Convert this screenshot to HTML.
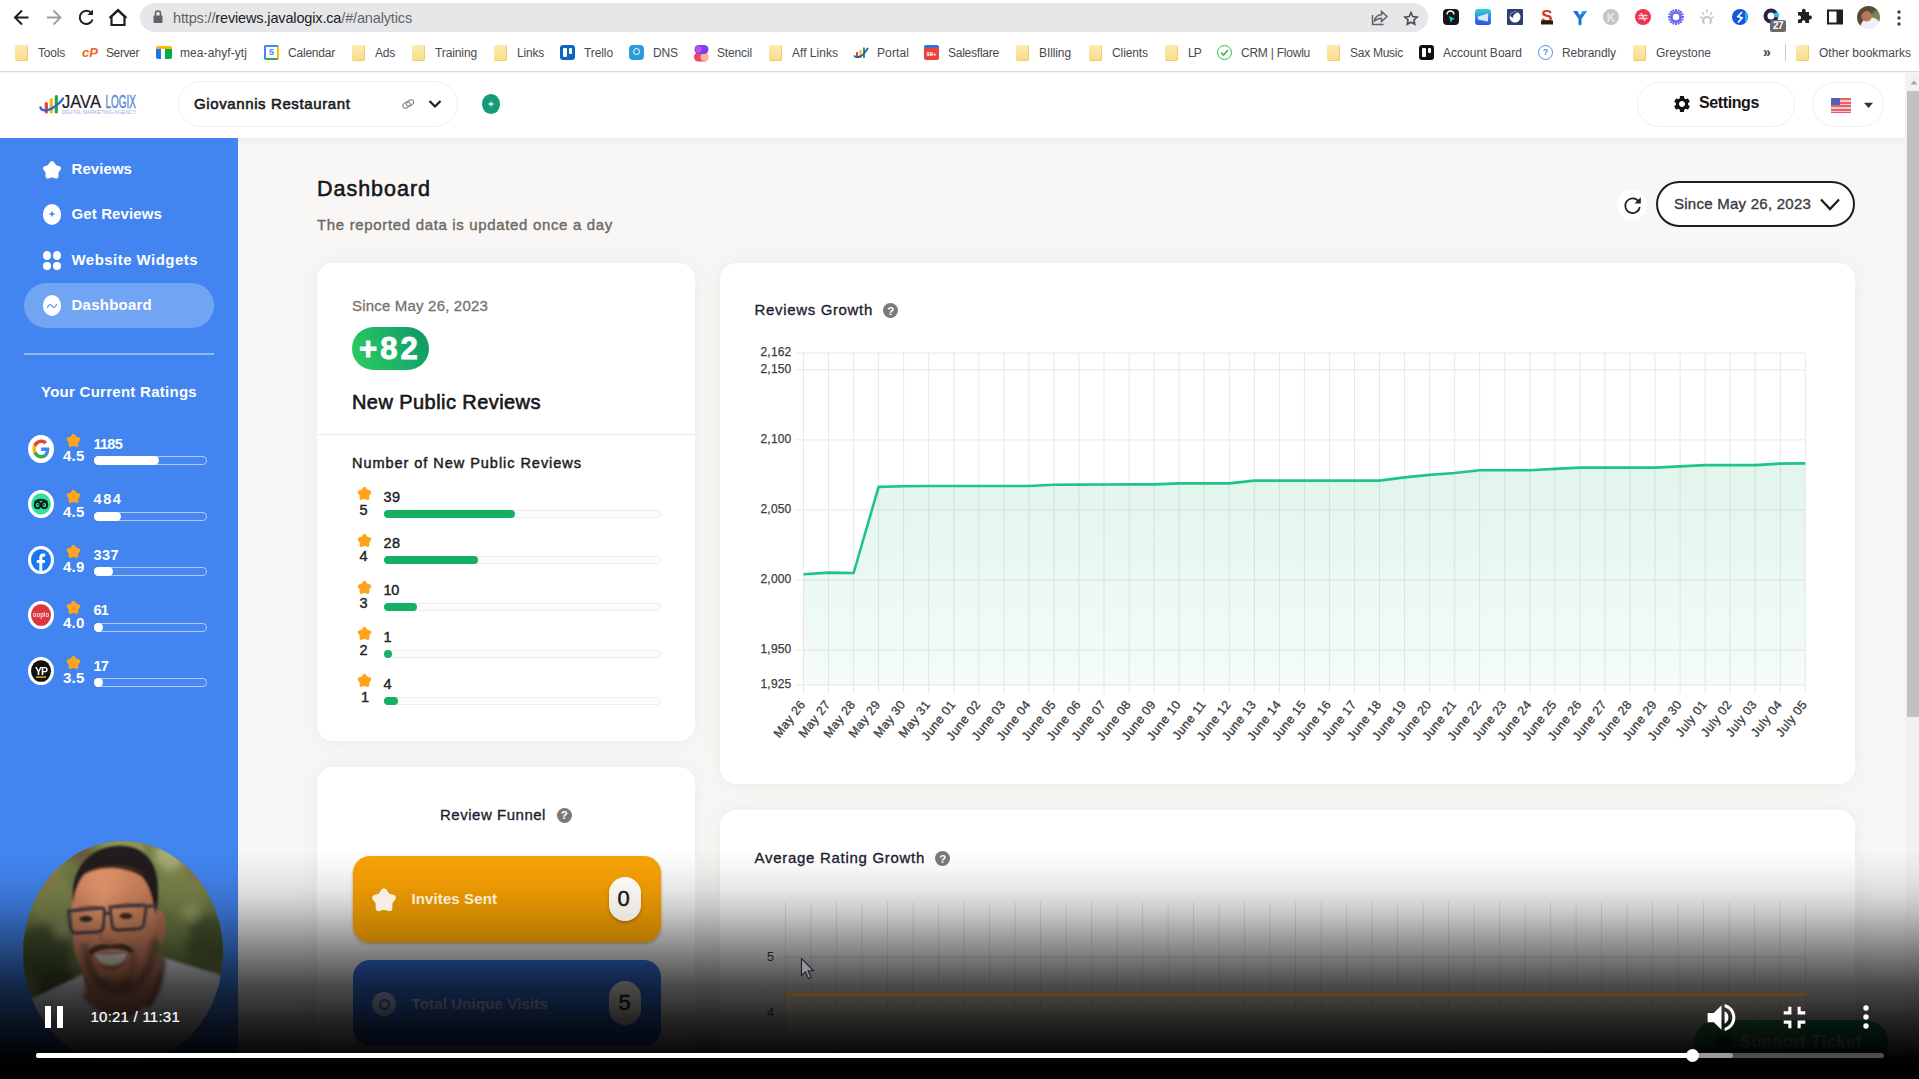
<!DOCTYPE html>
<html lang="en">
<head>
<meta charset="utf-8">
<title>Dashboard</title>
<style>
*{box-sizing:border-box;margin:0;padding:0}
html,body{width:1919px;height:1079px;overflow:hidden;background:#f8f6f4;font-family:"Liberation Sans",sans-serif;color:#1b1b1f}
.abs{position:absolute}
#stage{position:relative;width:1919px;height:1079px;overflow:hidden;background:#f9f7f5}
/* ---------- browser chrome ---------- */
#chrome{position:absolute;left:0;top:0;width:1919px;height:72px;background:#fff;border-bottom:1px solid #d9dadc}
#url{position:absolute;left:140px;top:3px;width:1288px;height:29px;border-radius:15px;background:#e6e7e9}
#url span{position:absolute;left:33px;top:6.5px;font-size:14.5px;color:#5f6368;letter-spacing:-.15px;white-space:nowrap}
#url span b{font-weight:400;color:#202124}
.bm{position:absolute;top:45px;font-size:12.5px;color:#3c4043;white-space:nowrap;letter-spacing:-.35px}
.fold{position:absolute;top:44.500px;width:12.500px;height:16px;border-radius:2px;background:linear-gradient(180deg,#fcebb0,#f9dc88);box-shadow:inset -1px -1px 0 #f1cd6a}
/* ---------- app header ---------- */
#hdr{position:absolute;left:0;top:73px;width:1905px;height:65px;background:#fff}
/* ---------- sidebar ---------- */
#side{position:absolute;left:0;top:138px;width:238px;height:941px;background:#4285f0;color:#fff}
.nav{position:absolute;left:71px;font-weight:700;font-size:15px;letter-spacing:-.2px;white-space:nowrap}
/* ---------- cards ---------- */
.card{position:absolute;background:#fff;border-radius:16px;box-shadow:0 0 20px rgba(70,66,60,.07)}
#scroll{position:absolute;left:1905px;top:73px;width:14px;height:1006px;background:#f1f1f1}
#scroll i{position:absolute;left:2px;top:18px;width:12px;height:626px;background:#c1c1c1}
</style>
</head>
<body>
<div id="stage">

<!-- BROWSER CHROME -->
<div id="chrome">
  <div id="url"><span>https://<b>reviews.javalogix.ca</b>/#/analytics</span></div>
  <svg class="abs" style="left:0;top:0" width="140" height="36" viewBox="0 0 140 36" fill="none" stroke-linecap="butt" stroke-linejoin="miter">
<path d="M28.5 17.5H15.5M22 10.5l-7 7 7 7" stroke="#1f1f1f" stroke-width="2"/>
<path d="M47 17.5h13M53.5 10.500l7 7-7 7" stroke="#9aa0a6" stroke-width="1.8"/>
<path d="M91.500 13.200A6.600 6.600 0 1 0 92.600 19.500" stroke="#1f1f1f" stroke-width="2"/>
<path d="M93 9.500v5.500h-5.500z" fill="#1f1f1f" stroke="none"/>
<path d="M111.500 25v-8.500l6.500-6 6.500 6V25z" stroke="#1f1f1f" stroke-width="2.200"/>
<path d="M109.500 18l8.500-8 8.500 8" stroke="#1f1f1f" stroke-width="2.200"/>
</svg>
<svg class="abs" style="left:152px;top:9px" width="12" height="16" viewBox="0 0 12 16"><rect x="1.500" y="6.500" width="9" height="7.500" rx="1" fill="#5f6368"/><path d="M3.500 7V4.500a2.500 2.500 0 0 1 5 0V7" fill="none" stroke="#5f6368" stroke-width="1.600"/></svg>
<svg class="abs" style="left:1368px;top:6px" width="56" height="24" viewBox="0 0 56 24" fill="none" stroke="#5f6368" stroke-width="1.500">
<path d="M4.500 9v9.500h11"/><path d="M6.500 15c.5-4 3-6 7-6.200V5.500l5.500 5-5.500 5v-3.300c-3 0-5 .8-7 2.800z"/>
<path transform="translate(43 12.500) scale(.8) translate(-43 -12.500)" d="M43 5.200l2.300 4.900 5.300.6-3.900 3.700 1 5.300-4.700-2.600-4.700 2.600 1-5.300-3.900-3.700 5.300-.6z" stroke="#4a4d52" stroke-width="2"/></svg>
<svg class="abs" style="left:1442px;top:8px" width="18" height="18" viewBox="0 0 18 18"><rect x="1" y="1" width="16" height="16" rx="4" fill="#15161c"/><path d="M5 6.500a3.500 3.500 0 0 1 7 0" stroke="#fff" stroke-width="1.500" fill="none"/><path d="M7 8l6 3-3 1-1 3z" fill="#18d3c0"/></svg>
<svg class="abs" style="left:1474px;top:8px" width="18" height="18" viewBox="0 0 18 18"><defs><linearGradient id="e2" x1="0" y1="0" x2="0" y2="1"><stop offset="0" stop-color="#2fd6c4"/><stop offset=".5" stop-color="#3a8df0"/><stop offset="1" stop-color="#2a4fe0"/></linearGradient></defs><rect x="1" y="1" width="16" height="16" rx="3" fill="url(#e2)"/><path d="M4 8.500l10-3v8l-10-2z" fill="#dbe9ff"/></svg>
<svg class="abs" style="left:1506px;top:8px" width="18" height="18" viewBox="0 0 18 18"><rect x="1" y="1" width="16" height="16" rx="1" fill="#2b3f73"/><circle cx="9" cy="9" r="5.500" fill="#fff"/><path d="M4 8a5 5 0 0 1 8-3c-3 0-5 2-5 5z" fill="#2b3f73"/></svg>
<svg class="abs" style="left:1538px;top:8px" width="18" height="18" viewBox="0 0 18 18"><text x="9" y="14" text-anchor="middle" font-family="Liberation Sans,sans-serif" font-weight="700" font-size="17" fill="#d6391f">S</text><rect x="3" y="12.500" width="12" height="4" fill="#2a1a14"/></svg>
<svg class="abs" style="left:1571px;top:8px" width="18" height="18" viewBox="0 0 18 18"><path d="M2 3h4.500l2.500 4.500L11.500 3H16l-5.500 8v5.500l-1.500 1-1.500-1V11z" fill="#1b78d8"/><path d="M9 7.500L11.500 3H16z" fill="#3aa0f0"/></svg>
<svg class="abs" style="left:1602px;top:8px" width="18" height="18" viewBox="0 0 18 18"><circle cx="9" cy="9" r="8" fill="#c4c4c4"/><text x="9" y="13.500" text-anchor="middle" font-family="Liberation Sans,sans-serif" font-weight="700" font-size="12" fill="#e6e6e6">K</text></svg>
<svg class="abs" style="left:1634px;top:8px" width="18" height="18" viewBox="0 0 18 18"><circle cx="9" cy="9" r="8" fill="#ee3350"/><path d="M4.500 7.500h9M4.500 10.500h9M7 5l4 8" stroke="#ffd6de" stroke-width="1.600" fill="none"/></svg>
<svg class="abs" style="left:1667px;top:8px" width="18" height="18" viewBox="0 0 18 18"><g stroke="#6b6cf0" stroke-width="2"><path d="M9 1v16M1 9h16M3.300 3.300l11.400 11.400M14.700 3.300L3.300 14.700M5.900 1.600l6.200 14.800M12.100 1.600L5.900 16.400M1.600 5.900l14.800 6.200M1.600 12.100l14.800-6.200"/></g><circle cx="9" cy="9" r="3.200" fill="#fff"/></svg>
<svg class="abs" style="left:1698px;top:8px" width="18" height="18" viewBox="0 0 18 18"><g stroke="#c9c9c9" stroke-width="1.400" fill="none"><path d="M9 1v4M4 4l2 3M14 4l-2 3M2 9l3 1M16 9l-3 1"/><path d="M6.500 16a4 4 0 1 1 5 0" stroke-width="2.200"/></g></svg>
<svg class="abs" style="left:1731px;top:8px" width="18" height="18" viewBox="0 0 18 18"><circle cx="9" cy="9" r="8" fill="#1557d8"/><path d="M14 3a8 8 0 0 1 0 12z" fill="#28b5f0"/><path d="M11 4L7 8.500l4 1.500-4 4.500" stroke="#fff" stroke-width="1.800" fill="none"/></svg>
<svg class="abs" style="left:1763px;top:8px" width="18" height="18" viewBox="0 0 18 18"><circle cx="8" cy="8" r="5.500" stroke="#2a1f4e" stroke-width="4" fill="none"/><circle cx="13.500" cy="7" r="2.500" fill="#25c7ea"/></svg>
<i class="abs" style="left:1770px;top:20px;width:16px;height:12px;border-radius:2px;background:#6a6a6a;color:#fff;font-style:normal;font-weight:700;font-size:10px;line-height:12px;text-align:center;letter-spacing:-.5px">27</i>
<svg class="abs" style="left:1795px;top:8px" width="18" height="18" viewBox="0 0 18 18"><path d="M7 2.500a1.800 1.800 0 0 1 3.600 0V4H14v3.600h1a1.900 1.900 0 0 1 0 3.800h-1V15h-3.600v-1a1.800 1.800 0 0 0-3.600 0v1H3v-3.600h1.200a1.900 1.900 0 0 0 0-3.800H3V4h4z" fill="#1f1f1f"/></svg>
<svg class="abs" style="left:1826px;top:8px" width="18" height="18" viewBox="0 0 18 18"><rect x="2" y="2.500" width="14" height="13" fill="none" stroke="#1f1f1f" stroke-width="2"/><rect x="10.500" y="2.500" width="5.500" height="13" fill="#1f1f1f"/></svg>
<i class="abs" style="left:1857px;top:6px;width:23px;height:23px;border-radius:50%;background:radial-gradient(circle at 42% 45%,#b9775a 0 26%,transparent 30%),radial-gradient(circle at 60% 95%,#eef0f6 0 38%,transparent 42%),linear-gradient(135deg,#5b4a36 0 45%,#6f8a54 55% 100%)"></i>
<svg class="abs" style="left:1896px;top:9px" width="6" height="18" viewBox="0 0 6 18"><circle cx="3" cy="3" r="1.700" fill="#3c4043"/><circle cx="3" cy="9" r="1.700" fill="#3c4043"/><circle cx="3" cy="15" r="1.700" fill="#3c4043"/></svg>
<i class="fold" style="left:15px"></i>
<span style="position:absolute;white-space:nowrap;left:38.0px;top:45.5px;font-size:12px;line-height:14px;font-weight:400;color:#474a4f;letter-spacing:-0.20px;">Tools</span>
<span style="position:absolute;white-space:nowrap;left:82.0px;top:44.5px;font-size:13px;line-height:16px;font-weight:700;color:#f26322;letter-spacing:0.05px;font-style:italic;">cP</span>
<span style="position:absolute;white-space:nowrap;left:106.0px;top:45.5px;font-size:12px;line-height:14px;font-weight:400;color:#474a4f;letter-spacing:-0.39px;">Server</span>
<i style="position:absolute;left:156px;top:46px;width:16px;height:13px;background:linear-gradient(90deg,#1a73e8 0 30%,#fff 30% 55%,#00ac47 55% 100%);border-top:3px solid #fbbc04;border-radius:2px"></i>
<span style="position:absolute;white-space:nowrap;left:180.0px;top:45.5px;font-size:12px;line-height:14px;font-weight:400;color:#474a4f;letter-spacing:0.08px;">mea-ahyf-ytj</span>
<i style="position:absolute;left:264px;top:45px;width:15px;height:15px;border-radius:3px;background:#fff;border:2.500px solid #4285f4;border-bottom-color:#34a853;border-right-color:#fbbc04;border-radius:2px;font-style:normal;font-size:9px;line-height:10px;font-weight:700;color:#4285f4;text-align:center">5</i>
<span style="position:absolute;white-space:nowrap;left:288.0px;top:45.5px;font-size:12px;line-height:14px;font-weight:400;color:#474a4f;letter-spacing:-0.21px;">Calendar</span>
<i class="fold" style="left:352px"></i>
<span style="position:absolute;white-space:nowrap;left:375.0px;top:45.5px;font-size:12px;line-height:14px;font-weight:400;color:#474a4f;letter-spacing:-0.23px;">Ads</span>
<i class="fold" style="left:412px"></i>
<span style="position:absolute;white-space:nowrap;left:435.0px;top:45.5px;font-size:12px;line-height:14px;font-weight:400;color:#474a4f;letter-spacing:-0.11px;">Training</span>
<i class="fold" style="left:494px"></i>
<span style="position:absolute;white-space:nowrap;left:517.0px;top:45.5px;font-size:12px;line-height:14px;font-weight:400;color:#474a4f;letter-spacing:-0.20px;">Links</span>
<i style="position:absolute;left:560px;top:45px;width:15px;height:15px;border-radius:3px;background:#0a66c2;"><b style="position:absolute;left:3px;top:3px;width:3.500px;height:9px;background:#fff;border-radius:1px"></b><b style="position:absolute;left:8.500px;top:3px;width:3.500px;height:6px;background:#fff;border-radius:1px"></b></i>
<span style="position:absolute;white-space:nowrap;left:584.0px;top:45.5px;font-size:12px;line-height:14px;font-weight:400;color:#474a4f;letter-spacing:-0.09px;">Trello</span>
<i style="position:absolute;left:629px;top:45px;width:15px;height:15px;border-radius:3px;background:#2d9bdb;border-radius:4px"><b style="position:absolute;left:4px;top:3px;width:7px;height:7px;border-radius:50%;border:1.500px solid #fff"></b></i>
<span style="position:absolute;white-space:nowrap;left:653.0px;top:45.5px;font-size:12px;line-height:14px;font-weight:400;color:#474a4f;letter-spacing:-0.11px;">DNS</span>
<svg class="abs" style="left:693px;top:43.500px" width="17" height="18" viewBox="0 0 17 18"><circle cx="11" cy="13" r="4.500" fill="#ff8a5c"/><rect x="1" y="8.500" width="14" height="9" rx="4.500" fill="#f0456a"/><circle cx="11.500" cy="13" r="4" fill="#ffb199"/><rect x="1.500" y="1" width="14" height="9" rx="4.500" fill="#7a3ff0"/><circle cx="5.500" cy="5.500" r="3.200" fill="#c44fe0"/></svg>
<span style="position:absolute;white-space:nowrap;left:717.0px;top:45.5px;font-size:12px;line-height:14px;font-weight:400;color:#474a4f;letter-spacing:-0.15px;">Stencil</span>
<i class="fold" style="left:769px"></i>
<span style="position:absolute;white-space:nowrap;left:792.0px;top:45.5px;font-size:12px;line-height:14px;font-weight:400;color:#474a4f;letter-spacing:0.02px;">Aff Links</span>
<svg class="abs" style="left:853px;top:45px" width="16" height="15" viewBox="0 0 16 15"><rect x="3" y="7" width="2" height="6" fill="#e8452f"/><rect x="6.500" y="5" width="2" height="8" fill="#f5b81c"/><rect x="10" y="2.500" width="2" height="10.500" fill="#1fa651"/><path d="M1 10.500c2 3 7 1.500 9.500-1.500S14 4.500 15 3" stroke="#2f55b0" stroke-width="1.800" fill="none"/></svg>
<span style="position:absolute;white-space:nowrap;left:877.0px;top:45.5px;font-size:12px;line-height:14px;font-weight:400;color:#474a4f;letter-spacing:0.11px;">Portal</span>
<i style="position:absolute;left:924px;top:45px;width:15px;height:15px;border-radius:3px;background:#e8433f;border-top:3px solid #3b6fd8;border-radius:2px;font-style:normal;font-size:6px;line-height:12px;color:#fff;text-align:center;font-weight:700">99+</i>
<span style="position:absolute;white-space:nowrap;left:948.0px;top:45.5px;font-size:12px;line-height:14px;font-weight:400;color:#474a4f;letter-spacing:-0.24px;">Salesflare</span>
<i class="fold" style="left:1016px"></i>
<span style="position:absolute;white-space:nowrap;left:1039.0px;top:45.5px;font-size:12px;line-height:14px;font-weight:400;color:#474a4f;letter-spacing:-0.10px;">BIlling</span>
<i class="fold" style="left:1089px"></i>
<span style="position:absolute;white-space:nowrap;left:1112.0px;top:45.5px;font-size:12px;line-height:14px;font-weight:400;color:#474a4f;letter-spacing:-0.10px;">Clients</span>
<i class="fold" style="left:1165px"></i>
<span style="position:absolute;white-space:nowrap;left:1188.0px;top:45.5px;font-size:12px;line-height:14px;font-weight:400;color:#474a4f;letter-spacing:-0.84px;">LP</span>
<i style="position:absolute;left:1217px;top:45px;width:15px;height:15px;border-radius:50%;border:1.500px solid #3bb54a"></i><svg class="abs" style="left:1220px;top:48px" width="9" height="9" viewBox="0 0 9 9"><path d="M1 4.500l2.500 2.500L8 2" stroke="#3bb54a" stroke-width="1.600" fill="none"/></svg>
<span style="position:absolute;white-space:nowrap;left:1241.0px;top:45.5px;font-size:12px;line-height:14px;font-weight:400;color:#474a4f;letter-spacing:-0.23px;">CRM | Flowlu</span>
<i class="fold" style="left:1327px"></i>
<span style="position:absolute;white-space:nowrap;left:1350.0px;top:45.5px;font-size:12px;line-height:14px;font-weight:400;color:#474a4f;letter-spacing:-0.26px;">Sax Music</span>
<i style="position:absolute;left:1419px;top:45px;width:15px;height:15px;border-radius:3px;background:#111;"><b style="position:absolute;left:3px;top:3px;width:3.500px;height:9px;background:#fff;border-radius:1px"></b><b style="position:absolute;left:8.500px;top:3px;width:3.500px;height:5px;background:#fff;border-radius:1px"></b></i>
<span style="position:absolute;white-space:nowrap;left:1443.0px;top:45.5px;font-size:12px;line-height:14px;font-weight:400;color:#474a4f;letter-spacing:0.02px;">Account Board</span>
<i style="position:absolute;left:1538px;top:45px;width:15px;height:15px;border-radius:50%;border:1.500px solid #4a90e2;font-style:normal;font-size:9px;line-height:12px;text-align:center;color:#4a90e2;font-weight:700">?</i>
<span style="position:absolute;white-space:nowrap;left:1562.0px;top:45.5px;font-size:12px;line-height:14px;font-weight:400;color:#474a4f;letter-spacing:-0.08px;">Rebrandly</span>
<i class="fold" style="left:1633px"></i>
<span style="position:absolute;white-space:nowrap;left:1656.0px;top:45.5px;font-size:12px;line-height:14px;font-weight:400;color:#474a4f;letter-spacing:-0.04px;">Greystone</span>
<i class="fold" style="left:1796px"></i>
<span style="position:absolute;white-space:nowrap;left:1819.0px;top:45.5px;font-size:12px;line-height:14px;font-weight:400;color:#474a4f;letter-spacing:-0.00px;">Other bookmarks</span>
<span style="position:absolute;white-space:nowrap;left:1763.0px;top:43.5px;font-size:14px;line-height:17px;font-weight:700;color:#3c4043;letter-spacing:0.00px;letter-spacing:0">&#187;</span>
<i class="abs" style="left:1785px;top:44px;width:1px;height:17px;background:#c9cbcf"></i>
</div>

<!-- APP HEADER -->
<div id="hdr">
  <svg class="abs" style="left:38px;top:18px" width="102" height="28" viewBox="38 91 102 28">
<rect x="44.700" y="102" width="3.200" height="11.500" rx="1.500" fill="#e8452f"/><rect x="49.700" y="98" width="3.200" height="15.500" rx="1.500" fill="#f5b81c"/><rect x="54.700" y="95" width="3.200" height="18.500" rx="1.500" fill="#1fa651"/>
<path d="M40.500 107.500c1 4 7 3.500 12 .5s8.500-6 10.500-9.500" stroke="#3566c8" stroke-width="2.400" fill="none" stroke-linecap="round"/>
<text x="62" y="107.500" font-family="Liberation Sans,sans-serif" font-size="17.500" fill="#1d1d1f" stroke="#1d1d1f" stroke-width=".2" textLength="39" lengthAdjust="spacingAndGlyphs">JAVA</text>
<text x="105.500" y="107.500" font-family="Liberation Sans,sans-serif" font-size="17.500" fill="#5c8ad0" stroke="#5c8ad0" stroke-width=".45" textLength="30.500" lengthAdjust="spacingAndGlyphs">LOGIX</text>
<text x="62" y="114" font-family="Liberation Sans,sans-serif" font-size="4.600" fill="#8fb0e2" textLength="74" lengthAdjust="spacingAndGlyphs">DIGITAL MARKETING AGENCY</text>
</svg>
<div class="abs" style="left:178px;top:8px;width:280px;height:46px;border-radius:23px;border:1px solid #efefef;background:#fff"></div>
<span style="position:absolute;white-space:nowrap;left:194.0px;top:22.0px;font-size:15px;line-height:18px;font-weight:400;color:#1b1b1f;letter-spacing:0.61px;-webkit-text-stroke:0.6px #1b1b1f;">Giovannis Restaurant</span>
<svg class="abs" style="left:400px;top:24px" width="16" height="14" viewBox="0 0 16 14" fill="none" stroke="#777" stroke-width="1"><ellipse cx="6.500" cy="8" rx="4" ry="2.600" transform="rotate(-35 6.500 8)"/><ellipse cx="10" cy="6" rx="4" ry="2.600" transform="rotate(-35 10 6)"/></svg>
<svg class="abs" style="left:428px;top:25px" width="14" height="12" viewBox="0 0 14 12"><path d="M1.500 3l5.500 5.500L12.500 3" stroke="#1b1b1f" stroke-width="2.200" fill="none"/></svg>
<i class="abs" style="left:482px;top:21px;width:18px;height:19.500px;border-radius:50%;background:#169a78"></i>
<svg class="abs" style="left:487px;top:27px" width="8" height="8" viewBox="0 0 8 8"><path d="M4 1.500v5M1.500 4h5" stroke="#d8fff0" stroke-width="1.300"/></svg>
<div class="abs" style="left:1637px;top:9px;width:158px;height:45px;border-radius:23px;border:1px solid #f0f0f0;background:#fff"></div>
<svg class="abs" style="left:1671.500px;top:20.500px" width="20" height="20" viewBox="0 0 24 24"><path fill="#111" d="M19.140 12.940c.04-.3.060-.61.060-.94 0-.32-.02-.64-.07-.94l2.030-1.580a.49.49 0 0 0 .12-.61l-1.920-3.320a.488.488 0 0 0-.59-.22l-2.390.96c-.5-.38-1.030-.7-1.620-.94l-.36-2.540a.484.484 0 0 0-.48-.41h-3.840c-.24 0-.43.170-.47.410l-.36 2.540c-.59.240-1.130.570-1.620.940l-2.390-.96c-.22-.08-.47 0-.59.220L2.740 8.870c-.12.210-.08.470.12.610l2.030 1.580c-.05.300-.09.630-.09.940s.02.640.07.940l-2.030 1.580a.49.49 0 0 0-.12.610l1.920 3.320c.12.220.37.290.59.220l2.390-.96c.5.380 1.030.7 1.620.94l.36 2.540c.05.240.24.410.48.410h3.840c.24 0 .44-.17.470-.41l.36-2.540c.59-.24 1.130-.56 1.620-.94l2.390.96c.22.080.47 0 .59-.22l1.920-3.320c.12-.22.070-.47-.12-.61l-2.010-1.580zM12 15.600c-1.980 0-3.600-1.620-3.600-3.600s1.620-3.600 3.600-3.600 3.600 1.620 3.600 3.600-1.620 3.600-3.600 3.600z"/></svg>
<span style="position:absolute;white-space:nowrap;left:1699.0px;top:20.0px;font-size:16px;line-height:19px;font-weight:700;color:#151515;letter-spacing:-0.39px;">Settings</span>
<div class="abs" style="left:1812px;top:9px;width:72px;height:45px;border-radius:23px;border:1px solid #f0f0f0;background:#fff"></div>
<i class="abs" style="left:1831px;top:24.500px;width:20px;height:15px;background:repeating-linear-gradient(180deg,#e8606c 0 2px,#f6c9cd 2px 3.500px)"></i><i class="abs" style="left:1831px;top:24.500px;width:9px;height:7.500px;background:#5560b8"></i>
<svg class="abs" style="left:1863px;top:29px" width="11" height="7" viewBox="0 0 11 7"><path d="M1 .8h9L5.500 6z" fill="#333"/></svg>
</div>

<!-- MAIN -->
<div id="main">
  <div class="abs" style="left:238px;top:138px;width:1667px;height:8px;background:linear-gradient(180deg,rgba(0,0,0,.045),rgba(0,0,0,0))"></div>
<span style="position:absolute;white-space:nowrap;left:317.0px;top:175.5px;font-size:21.5px;line-height:26px;font-weight:400;color:#16161a;letter-spacing:0.98px;-webkit-text-stroke:0.55px #16161a;">Dashboard</span>
<span style="position:absolute;white-space:nowrap;left:317.0px;top:215.5px;font-size:15px;line-height:18px;font-weight:400;color:#6f6963;letter-spacing:0.66px;-webkit-text-stroke:0.4px #6f6963;">The reported data is updated once a day</span>
<i class="abs" style="left:1617px;top:190px;width:30px;height:30px;border-radius:50%;background:#fff"></i>
<svg class="abs" style="left:1622px;top:194px" width="21" height="22" viewBox="0 0 21 22" fill="none"><path d="M16.600 7.600A7.300 7.300 0 1 0 17.800 13" stroke="#222" stroke-width="1.700"/><path d="M18.800 3.200v6.200h-6.200z" fill="#222"/></svg>
<div class="abs" style="left:1656px;top:181px;width:199px;height:46px;border-radius:23px;border:2px solid #1d1d1f;background:#fff"></div>
<span style="position:absolute;white-space:nowrap;left:1674.0px;top:195.0px;font-size:15px;line-height:18px;font-weight:400;color:#3a3a42;letter-spacing:0.25px;-webkit-text-stroke:0.35px #3a3a42;">Since May 26, 2023</span>
<svg class="abs" style="left:1819px;top:197px" width="22" height="15" viewBox="0 0 22 15"><path d="M2 2.500l9 9.500 9-9.500" stroke="#1d1d1f" stroke-width="2.300" fill="none"/></svg>
<div class="card" style="left:317px;top:263px;width:378px;height:478px"></div>
<span style="position:absolute;white-space:nowrap;left:352.0px;top:297.0px;font-size:15px;line-height:18px;font-weight:400;color:#77716b;letter-spacing:0.19px;-webkit-text-stroke:0.3px #77716b;">Since May 26, 2023</span>
<div class="abs" style="left:352px;top:327px;width:77px;height:43px;border-radius:22px;background:linear-gradient(62deg,#2fcc60 0%,#1db566 48%,#0e9468 100%)"></div>
<span style="position:absolute;white-space:nowrap;left:359.0px;top:330.0px;font-size:31px;line-height:37px;font-weight:700;color:#fff;letter-spacing:3.14px;-webkit-text-stroke:0.9px #fff;">+82</span>
<span style="position:absolute;white-space:nowrap;left:352.0px;top:389.5px;font-size:20px;line-height:24px;font-weight:400;color:#16161a;letter-spacing:0.43px;-webkit-text-stroke:0.6px #16161a;">New Public Reviews</span>
<i class="abs" style="left:317px;top:434px;width:378px;height:1px;background:#ece9e6"></i>
<span style="position:absolute;white-space:nowrap;left:352.0px;top:454.5px;font-size:14.5px;line-height:17px;font-weight:400;color:#1c1c24;letter-spacing:0.96px;-webkit-text-stroke:0.45px #1c1c24;">Number of New Public Reviews</span>
<svg class="abs" style="left:357.2px;top:486.0px" width="15" height="15.0" viewBox="0 0 24 24" preserveAspectRatio="none"><path d="M12.00 4.00L15.12 8.31L20.18 9.94L17.04 14.24L17.05 19.56L12.00 17.90L6.95 19.56L6.96 14.24L3.82 9.94L8.88 8.31Z" fill="#ffa41c" stroke="#ffa41c" stroke-width="5.400" stroke-linejoin="round"/></svg>
<span style="position:absolute;white-space:nowrap;left:359.5px;top:501.5px;font-size:14.5px;line-height:17px;font-weight:400;color:#222;letter-spacing:0.00px;-webkit-text-stroke:0.4px #222;letter-spacing:0">5</span>
<span style="position:absolute;white-space:nowrap;left:383.5px;top:488.5px;font-size:14.5px;line-height:17px;font-weight:400;color:#222;letter-spacing:0.44px;-webkit-text-stroke:0.4px #222;">39</span>
<div class="abs" style="left:383.500px;top:509.5px;width:277px;height:8px;border-radius:4px;border:1px solid #efedea;background:#fdfcfb"><i style="position:absolute;left:-1px;top:-1px;height:8px;width:131.5px;border-radius:4px;background:#15b066"></i></div>
<svg class="abs" style="left:357.2px;top:532.8px" width="15" height="15.0" viewBox="0 0 24 24" preserveAspectRatio="none"><path d="M12.00 4.00L15.12 8.31L20.18 9.94L17.04 14.24L17.05 19.56L12.00 17.90L6.95 19.56L6.96 14.24L3.82 9.94L8.88 8.31Z" fill="#ffa41c" stroke="#ffa41c" stroke-width="5.400" stroke-linejoin="round"/></svg>
<span style="position:absolute;white-space:nowrap;left:359.5px;top:548.3px;font-size:14.5px;line-height:17px;font-weight:400;color:#222;letter-spacing:0.00px;-webkit-text-stroke:0.4px #222;letter-spacing:0">4</span>
<span style="position:absolute;white-space:nowrap;left:383.5px;top:535.3px;font-size:14.5px;line-height:17px;font-weight:400;color:#222;letter-spacing:0.44px;-webkit-text-stroke:0.4px #222;">28</span>
<div class="abs" style="left:383.500px;top:556.3px;width:277px;height:8px;border-radius:4px;border:1px solid #efedea;background:#fdfcfb"><i style="position:absolute;left:-1px;top:-1px;height:8px;width:94.5px;border-radius:4px;background:#15b066"></i></div>
<svg class="abs" style="left:357.2px;top:579.6px" width="15" height="15.0" viewBox="0 0 24 24" preserveAspectRatio="none"><path d="M12.00 4.00L15.12 8.31L20.18 9.94L17.04 14.24L17.05 19.56L12.00 17.90L6.95 19.56L6.96 14.24L3.82 9.94L8.88 8.31Z" fill="#ffa41c" stroke="#ffa41c" stroke-width="5.400" stroke-linejoin="round"/></svg>
<span style="position:absolute;white-space:nowrap;left:359.5px;top:595.1px;font-size:14.5px;line-height:17px;font-weight:400;color:#222;letter-spacing:0.00px;-webkit-text-stroke:0.4px #222;letter-spacing:0">3</span>
<span style="position:absolute;white-space:nowrap;left:383.5px;top:582.1px;font-size:14.5px;line-height:17px;font-weight:400;color:#222;letter-spacing:-0.31px;-webkit-text-stroke:0.4px #222;">10</span>
<div class="abs" style="left:383.500px;top:603.1px;width:277px;height:8px;border-radius:4px;border:1px solid #efedea;background:#fdfcfb"><i style="position:absolute;left:-1px;top:-1px;height:8px;width:33.5px;border-radius:4px;background:#15b066"></i></div>
<svg class="abs" style="left:357.2px;top:626.4px" width="15" height="15.0" viewBox="0 0 24 24" preserveAspectRatio="none"><path d="M12.00 4.00L15.12 8.31L20.18 9.94L17.04 14.24L17.05 19.56L12.00 17.90L6.95 19.56L6.96 14.24L3.82 9.94L8.88 8.31Z" fill="#ffa41c" stroke="#ffa41c" stroke-width="5.400" stroke-linejoin="round"/></svg>
<span style="position:absolute;white-space:nowrap;left:359.5px;top:641.9px;font-size:14.5px;line-height:17px;font-weight:400;color:#222;letter-spacing:0.00px;-webkit-text-stroke:0.4px #222;letter-spacing:0">2</span>
<span style="position:absolute;white-space:nowrap;left:383.5px;top:628.9px;font-size:14.5px;line-height:17px;font-weight:400;color:#222;letter-spacing:-3.56px;-webkit-text-stroke:0.4px #222;">1</span>
<div class="abs" style="left:383.500px;top:649.9px;width:277px;height:8px;border-radius:4px;border:1px solid #efedea;background:#fdfcfb"><i style="position:absolute;left:-1px;top:-1px;height:8px;width:8.5px;border-radius:4px;background:#15b066"></i></div>
<svg class="abs" style="left:357.2px;top:673.2px" width="15" height="15.0" viewBox="0 0 24 24" preserveAspectRatio="none"><path d="M12.00 4.00L15.12 8.31L20.18 9.94L17.04 14.24L17.05 19.56L12.00 17.90L6.95 19.56L6.96 14.24L3.82 9.94L8.88 8.31Z" fill="#ffa41c" stroke="#ffa41c" stroke-width="5.400" stroke-linejoin="round"/></svg>
<span style="position:absolute;white-space:nowrap;left:361.0px;top:688.7px;font-size:14.5px;line-height:17px;font-weight:400;color:#222;letter-spacing:0.00px;-webkit-text-stroke:0.4px #222;letter-spacing:0">1</span>
<span style="position:absolute;white-space:nowrap;left:383.5px;top:675.7px;font-size:14.5px;line-height:17px;font-weight:400;color:#222;letter-spacing:1.44px;-webkit-text-stroke:0.4px #222;">4</span>
<div class="abs" style="left:383.500px;top:696.7px;width:277px;height:8px;border-radius:4px;border:1px solid #efedea;background:#fdfcfb"><i style="position:absolute;left:-1px;top:-1px;height:8px;width:14.0px;border-radius:4px;background:#15b066"></i></div>
<div class="card" style="left:720px;top:263px;width:1135px;height:521px"></div>
<span style="position:absolute;white-space:nowrap;left:754.5px;top:300.5px;font-size:15px;line-height:18px;font-weight:400;color:#1b1b30;letter-spacing:0.66px;-webkit-text-stroke:0.32px #1b1b30;">Reviews Growth</span>
<i class="abs" style="left:883.0px;top:303.0px;width:15px;height:15px;border-radius:50%;background:#7a7a7a"></i><span style="position:absolute;white-space:nowrap;left:887.3px;top:303.8px;font-size:11.5px;line-height:14px;font-weight:700;color:#fff;letter-spacing:0.00px;letter-spacing:0">?</span>
<svg class="abs" style="left:720px;top:330px" width="1135" height="440" viewBox="720 330 1135 440"><defs><linearGradient id="gf" x1="0" y1="0" x2="0" y2="1"><stop offset="0" stop-color="#22b573" stop-opacity=".135"/><stop offset="1" stop-color="#22b573" stop-opacity=".045"/></linearGradient></defs><path d="M803.5 353.0V693.5M828.5 353.0V693.5M853.6 353.0V693.5M878.6 353.0V693.5M903.7 353.0V693.5M928.7 353.0V693.5M953.8 353.0V693.5M978.8 353.0V693.5M1003.9 353.0V693.5M1028.9 353.0V693.5M1054.0 353.0V693.5M1079.0 353.0V693.5M1104.0 353.0V693.5M1129.1 353.0V693.5M1154.1 353.0V693.5M1179.2 353.0V693.5M1204.2 353.0V693.5M1229.3 353.0V693.5M1254.3 353.0V693.5M1279.4 353.0V693.5M1304.4 353.0V693.5M1329.4 353.0V693.5M1354.5 353.0V693.5M1379.5 353.0V693.5M1404.6 353.0V693.5M1429.6 353.0V693.5M1454.7 353.0V693.5M1479.7 353.0V693.5M1504.8 353.0V693.5M1529.8 353.0V693.5M1554.8 353.0V693.5M1579.9 353.0V693.5M1604.9 353.0V693.5M1630.0 353.0V693.5M1655.0 353.0V693.5M1680.1 353.0V693.5M1705.1 353.0V693.5M1730.2 353.0V693.5M1755.2 353.0V693.5M1780.3 353.0V693.5M1805.3 353.0V693.5M795.5 353.0H1805.3M795.5 369.8H1805.3M795.5 439.9H1805.3M795.5 509.9H1805.3M795.5 579.9H1805.3M795.5 650.0H1805.3M795.5 685.0H1805.3" stroke="#e8e8e8" stroke-width="1" fill="none"/><path d="M803.5 574.2L828.5 572.6L853.6 573.0L878.6 486.9L903.7 486.2L928.7 486.0L953.8 486.0L978.8 486.0L1003.9 486.0L1028.9 486.0L1054.0 484.7L1079.0 484.6L1104.0 484.5L1129.1 484.4L1154.1 484.4L1179.2 483.4L1204.2 483.4L1229.3 483.4L1254.3 480.6L1279.4 480.6L1304.4 480.6L1329.4 480.6L1354.5 480.6L1379.5 480.6L1404.6 477.4L1429.6 474.9L1454.7 473.0L1479.7 470.2L1504.8 470.2L1529.8 470.2L1554.8 468.9L1579.9 467.6L1604.9 467.6L1630.0 467.6L1655.0 467.6L1680.1 466.4L1705.1 465.1L1730.2 465.1L1755.2 465.1L1780.3 463.6L1805.3 463.4L1805.3 685.0L803.5 685.0Z" fill="url(#gf)"/><path d="M803.5 574.2L828.5 572.6L853.6 573.0L878.6 486.9L903.7 486.2L928.7 486.0L953.8 486.0L978.8 486.0L1003.9 486.0L1028.9 486.0L1054.0 484.7L1079.0 484.6L1104.0 484.5L1129.1 484.4L1154.1 484.4L1179.2 483.4L1204.2 483.4L1229.3 483.4L1254.3 480.6L1279.4 480.6L1304.4 480.6L1329.4 480.6L1354.5 480.6L1379.5 480.6L1404.6 477.4L1429.6 474.9L1454.7 473.0L1479.7 470.2L1504.8 470.2L1529.8 470.2L1554.8 468.9L1579.9 467.6L1604.9 467.6L1630.0 467.6L1655.0 467.6L1680.1 466.4L1705.1 465.1L1730.2 465.1L1755.2 465.1L1780.3 463.6L1805.3 463.4" stroke="#1fc587" stroke-width="2.600" fill="none" stroke-linejoin="round"/><text x="791.500" y="356.4" text-anchor="end" font-family="Liberation Sans,sans-serif" font-size="12" fill="#3d3d3d" stroke="#3d3d3d" stroke-width=".25" letter-spacing=".2">2,162</text><text x="791.500" y="373.2" text-anchor="end" font-family="Liberation Sans,sans-serif" font-size="12" fill="#3d3d3d" stroke="#3d3d3d" stroke-width=".25" letter-spacing=".2">2,150</text><text x="791.500" y="443.3" text-anchor="end" font-family="Liberation Sans,sans-serif" font-size="12" fill="#3d3d3d" stroke="#3d3d3d" stroke-width=".25" letter-spacing=".2">2,100</text><text x="791.500" y="513.3" text-anchor="end" font-family="Liberation Sans,sans-serif" font-size="12" fill="#3d3d3d" stroke="#3d3d3d" stroke-width=".25" letter-spacing=".2">2,050</text><text x="791.500" y="583.3" text-anchor="end" font-family="Liberation Sans,sans-serif" font-size="12" fill="#3d3d3d" stroke="#3d3d3d" stroke-width=".25" letter-spacing=".2">2,000</text><text x="791.500" y="653.4" text-anchor="end" font-family="Liberation Sans,sans-serif" font-size="12" fill="#3d3d3d" stroke="#3d3d3d" stroke-width=".25" letter-spacing=".2">1,950</text><text x="791.500" y="688.4" text-anchor="end" font-family="Liberation Sans,sans-serif" font-size="12" fill="#3d3d3d" stroke="#3d3d3d" stroke-width=".25" letter-spacing=".2">1,925</text><text transform="translate(805.9 704.5) rotate(-52)" text-anchor="end" font-family="Liberation Sans,sans-serif" font-size="12.400" fill="#3d3d3d" stroke="#3d3d3d" stroke-width=".3" letter-spacing=".4">May 26</text><text transform="translate(830.9 704.5) rotate(-52)" text-anchor="end" font-family="Liberation Sans,sans-serif" font-size="12.400" fill="#3d3d3d" stroke="#3d3d3d" stroke-width=".3" letter-spacing=".4">May 27</text><text transform="translate(856.0 704.5) rotate(-52)" text-anchor="end" font-family="Liberation Sans,sans-serif" font-size="12.400" fill="#3d3d3d" stroke="#3d3d3d" stroke-width=".3" letter-spacing=".4">May 28</text><text transform="translate(881.0 704.5) rotate(-52)" text-anchor="end" font-family="Liberation Sans,sans-serif" font-size="12.400" fill="#3d3d3d" stroke="#3d3d3d" stroke-width=".3" letter-spacing=".4">May 29</text><text transform="translate(906.1 704.5) rotate(-52)" text-anchor="end" font-family="Liberation Sans,sans-serif" font-size="12.400" fill="#3d3d3d" stroke="#3d3d3d" stroke-width=".3" letter-spacing=".4">May 30</text><text transform="translate(931.1 704.5) rotate(-52)" text-anchor="end" font-family="Liberation Sans,sans-serif" font-size="12.400" fill="#3d3d3d" stroke="#3d3d3d" stroke-width=".3" letter-spacing=".4">May 31</text><text transform="translate(956.2 704.5) rotate(-52)" text-anchor="end" font-family="Liberation Sans,sans-serif" font-size="12.400" fill="#3d3d3d" stroke="#3d3d3d" stroke-width=".3" letter-spacing=".4">June 01</text><text transform="translate(981.2 704.5) rotate(-52)" text-anchor="end" font-family="Liberation Sans,sans-serif" font-size="12.400" fill="#3d3d3d" stroke="#3d3d3d" stroke-width=".3" letter-spacing=".4">June 02</text><text transform="translate(1006.3 704.5) rotate(-52)" text-anchor="end" font-family="Liberation Sans,sans-serif" font-size="12.400" fill="#3d3d3d" stroke="#3d3d3d" stroke-width=".3" letter-spacing=".4">June 03</text><text transform="translate(1031.3 704.5) rotate(-52)" text-anchor="end" font-family="Liberation Sans,sans-serif" font-size="12.400" fill="#3d3d3d" stroke="#3d3d3d" stroke-width=".3" letter-spacing=".4">June 04</text><text transform="translate(1056.4 704.5) rotate(-52)" text-anchor="end" font-family="Liberation Sans,sans-serif" font-size="12.400" fill="#3d3d3d" stroke="#3d3d3d" stroke-width=".3" letter-spacing=".4">June 05</text><text transform="translate(1081.4 704.5) rotate(-52)" text-anchor="end" font-family="Liberation Sans,sans-serif" font-size="12.400" fill="#3d3d3d" stroke="#3d3d3d" stroke-width=".3" letter-spacing=".4">June 06</text><text transform="translate(1106.4 704.5) rotate(-52)" text-anchor="end" font-family="Liberation Sans,sans-serif" font-size="12.400" fill="#3d3d3d" stroke="#3d3d3d" stroke-width=".3" letter-spacing=".4">June 07</text><text transform="translate(1131.5 704.5) rotate(-52)" text-anchor="end" font-family="Liberation Sans,sans-serif" font-size="12.400" fill="#3d3d3d" stroke="#3d3d3d" stroke-width=".3" letter-spacing=".4">June 08</text><text transform="translate(1156.5 704.5) rotate(-52)" text-anchor="end" font-family="Liberation Sans,sans-serif" font-size="12.400" fill="#3d3d3d" stroke="#3d3d3d" stroke-width=".3" letter-spacing=".4">June 09</text><text transform="translate(1181.6 704.5) rotate(-52)" text-anchor="end" font-family="Liberation Sans,sans-serif" font-size="12.400" fill="#3d3d3d" stroke="#3d3d3d" stroke-width=".3" letter-spacing=".4">June 10</text><text transform="translate(1206.6 704.5) rotate(-52)" text-anchor="end" font-family="Liberation Sans,sans-serif" font-size="12.400" fill="#3d3d3d" stroke="#3d3d3d" stroke-width=".3" letter-spacing=".4">June 11</text><text transform="translate(1231.7 704.5) rotate(-52)" text-anchor="end" font-family="Liberation Sans,sans-serif" font-size="12.400" fill="#3d3d3d" stroke="#3d3d3d" stroke-width=".3" letter-spacing=".4">June 12</text><text transform="translate(1256.7 704.5) rotate(-52)" text-anchor="end" font-family="Liberation Sans,sans-serif" font-size="12.400" fill="#3d3d3d" stroke="#3d3d3d" stroke-width=".3" letter-spacing=".4">June 13</text><text transform="translate(1281.8 704.5) rotate(-52)" text-anchor="end" font-family="Liberation Sans,sans-serif" font-size="12.400" fill="#3d3d3d" stroke="#3d3d3d" stroke-width=".3" letter-spacing=".4">June 14</text><text transform="translate(1306.8 704.5) rotate(-52)" text-anchor="end" font-family="Liberation Sans,sans-serif" font-size="12.400" fill="#3d3d3d" stroke="#3d3d3d" stroke-width=".3" letter-spacing=".4">June 15</text><text transform="translate(1331.8 704.5) rotate(-52)" text-anchor="end" font-family="Liberation Sans,sans-serif" font-size="12.400" fill="#3d3d3d" stroke="#3d3d3d" stroke-width=".3" letter-spacing=".4">June 16</text><text transform="translate(1356.9 704.5) rotate(-52)" text-anchor="end" font-family="Liberation Sans,sans-serif" font-size="12.400" fill="#3d3d3d" stroke="#3d3d3d" stroke-width=".3" letter-spacing=".4">June 17</text><text transform="translate(1381.9 704.5) rotate(-52)" text-anchor="end" font-family="Liberation Sans,sans-serif" font-size="12.400" fill="#3d3d3d" stroke="#3d3d3d" stroke-width=".3" letter-spacing=".4">June 18</text><text transform="translate(1407.0 704.5) rotate(-52)" text-anchor="end" font-family="Liberation Sans,sans-serif" font-size="12.400" fill="#3d3d3d" stroke="#3d3d3d" stroke-width=".3" letter-spacing=".4">June 19</text><text transform="translate(1432.0 704.5) rotate(-52)" text-anchor="end" font-family="Liberation Sans,sans-serif" font-size="12.400" fill="#3d3d3d" stroke="#3d3d3d" stroke-width=".3" letter-spacing=".4">June 20</text><text transform="translate(1457.1 704.5) rotate(-52)" text-anchor="end" font-family="Liberation Sans,sans-serif" font-size="12.400" fill="#3d3d3d" stroke="#3d3d3d" stroke-width=".3" letter-spacing=".4">June 21</text><text transform="translate(1482.1 704.5) rotate(-52)" text-anchor="end" font-family="Liberation Sans,sans-serif" font-size="12.400" fill="#3d3d3d" stroke="#3d3d3d" stroke-width=".3" letter-spacing=".4">June 22</text><text transform="translate(1507.2 704.5) rotate(-52)" text-anchor="end" font-family="Liberation Sans,sans-serif" font-size="12.400" fill="#3d3d3d" stroke="#3d3d3d" stroke-width=".3" letter-spacing=".4">June 23</text><text transform="translate(1532.2 704.5) rotate(-52)" text-anchor="end" font-family="Liberation Sans,sans-serif" font-size="12.400" fill="#3d3d3d" stroke="#3d3d3d" stroke-width=".3" letter-spacing=".4">June 24</text><text transform="translate(1557.2 704.5) rotate(-52)" text-anchor="end" font-family="Liberation Sans,sans-serif" font-size="12.400" fill="#3d3d3d" stroke="#3d3d3d" stroke-width=".3" letter-spacing=".4">June 25</text><text transform="translate(1582.3 704.5) rotate(-52)" text-anchor="end" font-family="Liberation Sans,sans-serif" font-size="12.400" fill="#3d3d3d" stroke="#3d3d3d" stroke-width=".3" letter-spacing=".4">June 26</text><text transform="translate(1607.3 704.5) rotate(-52)" text-anchor="end" font-family="Liberation Sans,sans-serif" font-size="12.400" fill="#3d3d3d" stroke="#3d3d3d" stroke-width=".3" letter-spacing=".4">June 27</text><text transform="translate(1632.4 704.5) rotate(-52)" text-anchor="end" font-family="Liberation Sans,sans-serif" font-size="12.400" fill="#3d3d3d" stroke="#3d3d3d" stroke-width=".3" letter-spacing=".4">June 28</text><text transform="translate(1657.4 704.5) rotate(-52)" text-anchor="end" font-family="Liberation Sans,sans-serif" font-size="12.400" fill="#3d3d3d" stroke="#3d3d3d" stroke-width=".3" letter-spacing=".4">June 29</text><text transform="translate(1682.5 704.5) rotate(-52)" text-anchor="end" font-family="Liberation Sans,sans-serif" font-size="12.400" fill="#3d3d3d" stroke="#3d3d3d" stroke-width=".3" letter-spacing=".4">June 30</text><text transform="translate(1707.5 704.5) rotate(-52)" text-anchor="end" font-family="Liberation Sans,sans-serif" font-size="12.400" fill="#3d3d3d" stroke="#3d3d3d" stroke-width=".3" letter-spacing=".4">July 01</text><text transform="translate(1732.6 704.5) rotate(-52)" text-anchor="end" font-family="Liberation Sans,sans-serif" font-size="12.400" fill="#3d3d3d" stroke="#3d3d3d" stroke-width=".3" letter-spacing=".4">July 02</text><text transform="translate(1757.6 704.5) rotate(-52)" text-anchor="end" font-family="Liberation Sans,sans-serif" font-size="12.400" fill="#3d3d3d" stroke="#3d3d3d" stroke-width=".3" letter-spacing=".4">July 03</text><text transform="translate(1782.7 704.5) rotate(-52)" text-anchor="end" font-family="Liberation Sans,sans-serif" font-size="12.400" fill="#3d3d3d" stroke="#3d3d3d" stroke-width=".3" letter-spacing=".4">July 04</text><text transform="translate(1807.7 704.5) rotate(-52)" text-anchor="end" font-family="Liberation Sans,sans-serif" font-size="12.400" fill="#3d3d3d" stroke="#3d3d3d" stroke-width=".3" letter-spacing=".4">July 05</text></svg>
<div class="card" style="left:317px;top:767px;width:378px;height:340px"></div>
<span style="position:absolute;white-space:nowrap;left:440.0px;top:805.5px;font-size:15px;line-height:18px;font-weight:400;color:#1b1b30;letter-spacing:0.52px;-webkit-text-stroke:0.32px #1b1b30;">Review Funnel</span>
<i class="abs" style="left:556.5px;top:807.5px;width:15px;height:15px;border-radius:50%;background:#7a7a7a"></i><span style="position:absolute;white-space:nowrap;left:560.8px;top:808.3px;font-size:11.5px;line-height:14px;font-weight:700;color:#fff;letter-spacing:0.00px;letter-spacing:0">?</span>
<div class="abs" style="left:352.500px;top:960px;width:308px;height:86px;border-radius:17px;background:linear-gradient(180deg,#3a78ee,#346fe3)"></div>
<i class="abs" style="left:372px;top:992px;width:24px;height:24px;border-radius:50%;background:#c9d8f5"></i><i class="abs" style="left:378.500px;top:998.500px;width:11px;height:11px;border-radius:50%;border:2px solid #3a78ee"></i>
<span style="position:absolute;white-space:nowrap;left:411.5px;top:994.5px;font-size:15px;line-height:18px;font-weight:700;color:#c6d6f5;letter-spacing:0.15px;">Total Unique Visits</span>
<div class="abs" style="left:609px;top:981px;width:32px;height:44px;border-radius:16px;background:#fffdf8"></div>
<span style="position:absolute;white-space:nowrap;left:618.5px;top:990.0px;font-size:22px;line-height:26px;font-weight:400;color:#1d1d1f;letter-spacing:0.00px;-webkit-text-stroke:0.5px #1d1d1f;letter-spacing:0">5</span>
<div class="card" style="left:720px;top:810px;width:1135px;height:300px"></div>
<span style="position:absolute;white-space:nowrap;left:754.5px;top:849.0px;font-size:15px;line-height:18px;font-weight:400;color:#1b1b30;letter-spacing:0.71px;-webkit-text-stroke:0.32px #1b1b30;">Average Rating Growth</span>
<i class="abs" style="left:935.0px;top:851.0px;width:15px;height:15px;border-radius:50%;background:#7a7a7a"></i><span style="position:absolute;white-space:nowrap;left:939.3px;top:851.8px;font-size:11.5px;line-height:14px;font-weight:700;color:#fff;letter-spacing:0.00px;letter-spacing:0">?</span>
<svg class="abs" style="left:720px;top:890px" width="1135" height="189" viewBox="720 890 1135 189"><path d="M785.6 902V1079M811.1 902V1079M836.6 902V1079M862.1 902V1079M887.6 902V1079M913.1 902V1079M938.6 902V1079M964.1 902V1079M989.6 902V1079M1015.1 902V1079M1040.6 902V1079M1066.1 902V1079M1091.6 902V1079M1117.1 902V1079M1142.6 902V1079M1168.1 902V1079M1193.6 902V1079M1219.1 902V1079M1244.6 902V1079M1270.1 902V1079M1295.6 902V1079M1321.1 902V1079M1346.6 902V1079M1372.1 902V1079M1397.6 902V1079M1423.1 902V1079M1448.6 902V1079M1474.1 902V1079M1499.6 902V1079M1525.1 902V1079M1550.6 902V1079M1576.1 902V1079M1601.6 902V1079M1627.1 902V1079M1652.6 902V1079M1678.1 902V1079M1703.6 902V1079M1729.1 902V1079M1754.6 902V1079M1780.1 902V1079M1805.6 902V1079M780 957H1805.600M780 1012.500H1805.600" stroke="#e6e6e6" stroke-width="1" fill="none"/><path d="M785.600 994.500H1805.600" stroke="#f5a000" stroke-width="3"/><text x="774" y="961" text-anchor="end" font-family="Liberation Sans,sans-serif" font-size="12.500" fill="#3d3d3d">5</text><text x="774" y="1017" text-anchor="end" font-family="Liberation Sans,sans-serif" font-size="12.500" fill="#3d3d3d">4</text></svg>
<div class="abs" style="left:1694px;top:1020px;width:194px;height:44px;border-radius:22px;background:#1fb46a"></div>
<span style="position:absolute;white-space:nowrap;left:1740.0px;top:1032.0px;font-size:16px;line-height:19px;font-weight:700;color:#eafff3;letter-spacing:0.73px;">Support Ticket</span>
<i class="abs" style="left:1716px;top:1035px;width:15px;height:12px;border-radius:2px;background:#0d6a3c"></i>
</div>

<!-- SIDEBAR -->
<div id="side">
  <svg class="abs" style="left:41.5px;top:21.5px" width="20" height="20.0" viewBox="0 0 24 24" preserveAspectRatio="none"><path d="M12.00 4.00L15.12 8.31L20.18 9.94L17.04 14.24L17.05 19.56L12.00 17.90L6.95 19.56L6.96 14.24L3.82 9.94L8.88 8.31Z" fill="#fff" stroke="#fff" stroke-width="5.400" stroke-linejoin="round"/></svg>
<span style="position:absolute;white-space:nowrap;left:71.5px;top:22.0px;font-size:15px;line-height:18px;font-weight:700;color:#fff;letter-spacing:0.07px;">Reviews</span>
<i class="abs" style="left:42.500px;top:66px;width:18.500px;height:20.500px;border-radius:50%;background:#fff"></i><svg class="abs" style="left:47.500px;top:72px" width="8" height="8" viewBox="0 0 8 8"><path d="M4 1.500v5M1.500 4h5" stroke="#4285f0" stroke-width="1.400"/></svg>
<span style="position:absolute;white-space:nowrap;left:71.5px;top:66.5px;font-size:15px;line-height:18px;font-weight:700;color:#fff;letter-spacing:0.12px;">Get Reviews</span>
<i class="abs" style="left:42.5px;top:113px;width:8px;height:8.500px;border-radius:50%;background:#fff"></i>
<i class="abs" style="left:53.0px;top:113px;width:8px;height:8.500px;border-radius:50%;background:#fff"></i>
<i class="abs" style="left:42.5px;top:123.5px;width:8px;height:8.500px;border-radius:50%;background:#fff"></i>
<i class="abs" style="left:53.0px;top:123.5px;width:8px;height:8.500px;border-radius:50%;background:#fff"></i>
<span style="position:absolute;white-space:nowrap;left:71.5px;top:112.5px;font-size:15px;line-height:18px;font-weight:700;color:#fff;letter-spacing:0.46px;">Website Widgets</span>
<div class="abs" style="left:24px;top:145px;width:190px;height:45px;border-radius:23px;background:rgba(255,255,255,.26)"></div>
<i class="abs" style="left:42.500px;top:157px;width:18.500px;height:20.500px;border-radius:50%;background:#fff"></i><svg class="abs" style="left:45.500px;top:163.5px" width="12" height="8" viewBox="0 0 12 8"><path d="M1.500 5.500C3 2 4.500 2 6 4s3 2 4.500-1.500" stroke="#6b9df0" stroke-width="1.400" fill="none" stroke-linecap="round"/></svg>
<span style="position:absolute;white-space:nowrap;left:71.5px;top:158.0px;font-size:15px;line-height:18px;font-weight:700;color:#fff;letter-spacing:0.24px;">Dashboard</span>
<i class="abs" style="left:24px;top:215px;width:190px;height:2px;background:rgba(255,255,255,.42)"></i>
<span style="position:absolute;white-space:nowrap;left:41.0px;top:245.0px;font-size:15px;line-height:18px;font-weight:700;color:#fff;letter-spacing:0.27px;">Your Current Ratings</span>
<div class="abs" style="left:27.500px;top:297.5px;width:26px;height:26px;transform:scaleY(1.085);transform-origin:50% 50%"><svg width="26" height="26" viewBox="0 0 26 26"><circle cx="13" cy="13" r="13" fill="#fff"/><g transform="translate(13 13) scale(1.3) translate(-13.100 -13)"><path d="M19.500 13.200c0-.5 0-.9-.1-1.300h-6.200v2.500h3.600c-.2.900-.7 1.600-1.400 2.100l2.100 1.700c1.300-1.200 2-2.900 2-5z" fill="#4285f4"/><path d="M13.200 19.800c1.800 0 3.300-.6 4.400-1.600l-2.100-1.700c-.6.400-1.400.700-2.300.700-1.800 0-3.300-1.200-3.800-2.800l-2.200 1.700c1.100 2.200 3.400 3.700 6 3.700z" fill="#34a853"/><path d="M9.400 14.400c-.1-.4-.2-.9-.2-1.400s.1-1 .2-1.400L7.200 9.900c-.5.900-.7 2-.7 3.100s.3 2.200.7 3.100z" fill="#fbbc05"/><path d="M13.200 8.800c1 0 1.900.3 2.600 1l1.900-1.900c-1.200-1.100-2.700-1.700-4.500-1.700-2.600 0-4.900 1.500-6 3.700l2.200 1.700c.5-1.600 2-2.800 3.800-2.800z" fill="#ea4335"/></g></svg></div>
<svg class="abs" style="left:66.4px;top:295.1px" width="15" height="15.0" viewBox="0 0 24 24" preserveAspectRatio="none"><path d="M12.00 4.00L15.12 8.31L20.18 9.94L17.04 14.24L17.05 19.56L12.00 17.90L6.95 19.56L6.96 14.24L3.82 9.94L8.88 8.31Z" fill="#ffa41c" stroke="#ffa41c" stroke-width="5.400" stroke-linejoin="round"/></svg>
<span style="position:absolute;white-space:nowrap;left:63.0px;top:309.3px;font-size:15px;line-height:18px;font-weight:700;color:#fff;letter-spacing:0.22px;">4.5</span>
<span style="position:absolute;white-space:nowrap;left:93.5px;top:297.5px;font-size:14.5px;line-height:17px;font-weight:700;color:#fff;letter-spacing:-0.74px;">1185</span>
<div class="abs" style="left:93.500px;top:318.0px;width:113px;height:9px;border-radius:5px;border:1px solid rgba(255,255,255,.55);background:rgba(255,255,255,.03)"><i style="position:absolute;left:-1px;top:-1px;height:9px;width:65.5px;border-radius:5px;background:#fff"></i></div>
<div class="abs" style="left:27.500px;top:353.0px;width:26px;height:26px;transform:scaleY(1.085);transform-origin:50% 50%"><svg width="26" height="26" viewBox="0 0 26 26"><circle cx="13" cy="13" r="13" fill="#fff"/><circle cx="13" cy="13" r="9.800" fill="#34e0a1"/><path d="M6.500 11.200c4-2.600 9-2.600 13 0" stroke="#06241a" stroke-width="1.800" fill="none"/><circle cx="9.600" cy="14" r="2.900" fill="none" stroke="#06241a" stroke-width="2"/><circle cx="16.400" cy="14" r="2.900" fill="none" stroke="#06241a" stroke-width="2"/><circle cx="10" cy="13.700" r=".8" fill="#0a2a1f"/><circle cx="16" cy="13.700" r=".8" fill="#0a2a1f"/></svg></div>
<svg class="abs" style="left:66.4px;top:350.6px" width="15" height="15.0" viewBox="0 0 24 24" preserveAspectRatio="none"><path d="M12.00 4.00L15.12 8.31L20.18 9.94L17.04 14.24L17.05 19.56L12.00 17.90L6.95 19.56L6.96 14.24L3.82 9.94L8.88 8.31Z" fill="#ffa41c" stroke="#ffa41c" stroke-width="5.400" stroke-linejoin="round"/></svg>
<span style="position:absolute;white-space:nowrap;left:63.0px;top:364.8px;font-size:15px;line-height:18px;font-weight:700;color:#fff;letter-spacing:0.22px;">4.5</span>
<span style="position:absolute;white-space:nowrap;left:93.5px;top:353.0px;font-size:14.5px;line-height:17px;font-weight:700;color:#fff;letter-spacing:1.60px;">484</span>
<div class="abs" style="left:93.500px;top:373.5px;width:113px;height:9px;border-radius:5px;border:1px solid rgba(255,255,255,.55);background:rgba(255,255,255,.03)"><i style="position:absolute;left:-1px;top:-1px;height:9px;width:27.5px;border-radius:5px;background:#fff"></i></div>
<div class="abs" style="left:27.500px;top:408.5px;width:26px;height:26px;transform:scaleY(1.085);transform-origin:50% 50%"><svg width="26" height="26" viewBox="0 0 26 26"><circle cx="13" cy="13" r="13" fill="#fff"/><circle cx="13" cy="13" r="10" fill="#1877f2"/><path d="M14.300 23v-7.200h2.400l.4-2.800h-2.800v-1.800c0-.8.400-1.500 1.600-1.500h1.300V7.300s-1.100-.2-2.200-.2c-2.300 0-3.700 1.400-3.700 3.800V13H8.800v2.800h2.500V23z" fill="#fff"/></svg></div>
<svg class="abs" style="left:66.4px;top:406.1px" width="15" height="15.0" viewBox="0 0 24 24" preserveAspectRatio="none"><path d="M12.00 4.00L15.12 8.31L20.18 9.94L17.04 14.24L17.05 19.56L12.00 17.90L6.95 19.56L6.96 14.24L3.82 9.94L8.88 8.31Z" fill="#ffa41c" stroke="#ffa41c" stroke-width="5.400" stroke-linejoin="round"/></svg>
<span style="position:absolute;white-space:nowrap;left:63.0px;top:420.3px;font-size:15px;line-height:18px;font-weight:700;color:#fff;letter-spacing:0.22px;">4.9</span>
<span style="position:absolute;white-space:nowrap;left:93.5px;top:408.5px;font-size:14.5px;line-height:17px;font-weight:700;color:#fff;letter-spacing:0.44px;">337</span>
<div class="abs" style="left:93.500px;top:429.0px;width:113px;height:9px;border-radius:5px;border:1px solid rgba(255,255,255,.55);background:rgba(255,255,255,.03)"><i style="position:absolute;left:-1px;top:-1px;height:9px;width:19.5px;border-radius:5px;background:#fff"></i></div>
<div class="abs" style="left:27.500px;top:464.0px;width:26px;height:26px;transform:scaleY(1.085);transform-origin:50% 50%"><svg width="26" height="26" viewBox="0 0 26 26"><circle cx="13" cy="13" r="13" fill="#fff"/><circle cx="13" cy="13" r="10" fill="#da3743"/><text x="13" y="15.200" text-anchor="middle" font-family="Liberation Sans,sans-serif" font-size="6" font-weight="700" fill="#fbd9dc">ooplo</text></svg></div>
<svg class="abs" style="left:66.4px;top:461.6px" width="15" height="15.0" viewBox="0 0 24 24" preserveAspectRatio="none"><path d="M12.00 4.00L15.12 8.31L20.18 9.94L17.04 14.24L17.05 19.56L12.00 17.90L6.95 19.56L6.96 14.24L3.82 9.94L8.88 8.31Z" fill="#ffa41c" stroke="#ffa41c" stroke-width="5.400" stroke-linejoin="round"/></svg>
<span style="position:absolute;white-space:nowrap;left:63.0px;top:475.8px;font-size:15px;line-height:18px;font-weight:700;color:#fff;letter-spacing:0.22px;">4.0</span>
<span style="position:absolute;white-space:nowrap;left:93.5px;top:464.0px;font-size:14.5px;line-height:17px;font-weight:700;color:#fff;letter-spacing:-0.81px;">61</span>
<div class="abs" style="left:93.500px;top:484.5px;width:113px;height:9px;border-radius:5px;border:1px solid rgba(255,255,255,.55);background:rgba(255,255,255,.03)"><i style="position:absolute;left:-1px;top:-1px;height:9px;width:9.5px;border-radius:5px;background:#fff"></i></div>
<div class="abs" style="left:27.500px;top:519.5px;width:26px;height:26px;transform:scaleY(1.085);transform-origin:50% 50%"><svg width="26" height="26" viewBox="0 0 26 26"><circle cx="13" cy="13" r="13" fill="#fff"/><circle cx="13" cy="13" r="10" fill="#111"/><text x="13" y="17" text-anchor="middle" font-family="Liberation Sans,sans-serif" font-size="10.500" font-weight="700" fill="#fff" letter-spacing="-1">YP</text><rect x="8" y="18" width="10" height="1.200" fill="#ffd400"/></svg></div>
<svg class="abs" style="left:66.4px;top:517.1px" width="15" height="15.0" viewBox="0 0 24 24" preserveAspectRatio="none"><path d="M12.00 4.00L15.12 8.31L20.18 9.94L17.04 14.24L17.05 19.56L12.00 17.90L6.95 19.56L6.96 14.24L3.82 9.94L8.88 8.31Z" fill="#ffa41c" stroke="#ffa41c" stroke-width="5.400" stroke-linejoin="round"/></svg>
<span style="position:absolute;white-space:nowrap;left:63.0px;top:531.3px;font-size:15px;line-height:18px;font-weight:700;color:#fff;letter-spacing:0.22px;">3.5</span>
<span style="position:absolute;white-space:nowrap;left:93.5px;top:519.5px;font-size:14.5px;line-height:17px;font-weight:700;color:#fff;letter-spacing:-0.81px;">17</span>
<div class="abs" style="left:93.500px;top:540.0px;width:113px;height:9px;border-radius:5px;border:1px solid rgba(255,255,255,.55);background:rgba(255,255,255,.03)"><i style="position:absolute;left:-1px;top:-1px;height:9px;width:9.5px;border-radius:5px;background:#fff"></i></div>
</div>

<div id="scroll"><i></i><svg class="abs" style="left:4.5px;top:7px" width="8" height="5" viewBox="0 0 9 6"><path d="M4.500 .5L8.500 5.500H.5z" fill="#a3a3a3"/></svg></div>

<!-- VIDEO OVERLAY -->
<svg class="abs" style="left:23px;top:841px" width="200" height="224" viewBox="0 0 200 224">
<defs><clipPath id="avc"><ellipse cx="100" cy="112" rx="100" ry="112"/></clipPath>
<filter id="b3" x="-20%" y="-20%" width="140%" height="140%"><feGaussianBlur stdDeviation="1.600"/></filter>
<filter id="b6" x="-30%" y="-30%" width="160%" height="160%"><feGaussianBlur stdDeviation="4.500"/></filter>
<filter id="b1" x="-20%" y="-20%" width="140%" height="140%"><feGaussianBlur stdDeviation=".9"/></filter>
<filter id="b2" x="-20%" y="-20%" width="140%" height="140%"><feGaussianBlur stdDeviation="2"/></filter>
<radialGradient id="skin" cx=".36" cy=".28" r=".78"><stop offset="0" stop-color="#f0a276"/><stop offset=".4" stop-color="#dc8c64"/><stop offset=".75" stop-color="#cb8060"/><stop offset="1" stop-color="#b87154"/></radialGradient></defs>
<g clip-path="url(#avc)">
<rect width="200" height="224" fill="#6b7a44"/>
<g filter="url(#b6)"><circle cx="28" cy="58" r="24" fill="#7f8750"/><circle cx="22" cy="30" r="18" fill="#8a7c4c"/><circle cx="160" cy="48" r="28" fill="#7d8649"/><circle cx="185" cy="98" r="24" fill="#4b5a33"/><circle cx="152" cy="92" r="15" fill="#72824a"/><circle cx="20" cy="112" r="28" fill="#45532f"/><circle cx="100" cy="8" r="22" fill="#8c9458"/><circle cx="146" cy="14" r="15" fill="#a8aa74"/><circle cx="174" cy="30" r="10" fill="#8a6f48"/><circle cx="58" cy="12" r="12" fill="#6a5a3c"/><circle cx="36" cy="146" r="20" fill="#3f4d2c"/><circle cx="176" cy="122" r="12" fill="#5a6a3c"/><circle cx="40" cy="88" r="10" fill="#8c9060"/><circle cx="168" cy="72" r="9" fill="#9aa066"/></g>
<g filter="url(#b3)"><path d="M-5 230V166L8 158L60 133C63 150 80 172 100 176C118 172 133 150 138 116L198 134V230z" fill="#f1f3f8"/></g>
<g filter="url(#b2)"><path d="M62 130c2 12 1 20-2 26 10 12 24 20 40 20 18-2 30-16 36-36 0-10 0-20 2-30z" fill="#b37256"/><path d="M138 116c0 16-6 34-16 48l5 3c10-14 16-34 15-50z" fill="#6e4a3c"/></g>
<g filter="url(#b1)">
<ellipse cx="137.500" cy="86" rx="5.500" ry="17" fill="#bd7354"/>
<path d="M49 60c0-26 18-42 44-42 28 0 42 18 41 44 0 14-1 28-3 42-3 24-18 46-37 46-22 0-39-20-43-44-2-14-2-30-2-46z" fill="url(#skin)"/>
<path d="M50 62c-3-32 14-55 43-57 30-2 43 18 42 48 0 8-1 14-3 20-2-16-6-30-14-38-18-10-42-10-56-2-6 6-10 16-12 29z" fill="#231e1d"/>
<path d="M54 38c8-9 22-14 38-14 16 0 26 5 32 12-10-7-22-9-34-9-14 0-26 4-36 11z" fill="#5a3a2c" opacity=".6"/>
</g>
<g filter="url(#b2)" fill="none" stroke="#3c2922" stroke-linecap="round"><path d="M62 106C63 134 80 150 96 150C114 150 128 133 131 102" stroke-width="8" opacity=".40"/><path d="M67 113C67 126 73 138 82 144M110 110C112 124 108 137 103 144" stroke-width="5" opacity=".32"/><path d="M84 140c6 5 14 5 20 0" stroke-width="9" opacity=".34"/></g>
<g filter="url(#b1)">
<path d="M65 112c4-9 14-10 23-8 9-3 19-1 23 6l-4 2c-8-6-30-6-38 2z" fill="#33211d" opacity=".78"/>
<path d="M72 113c8-3 25-4 32-1-2 9-9 12-16 12s-13-3-16-11z" fill="#e9ddd5"/>
<path d="M72 113c8-2 25-3 32-1-8 1-23 2-32 1z" fill="#b06a5c"/>
<path d="M74 122c8 5 20 5 28-2-2 6-8 9-14 9s-11-3-14-7z" fill="#a45a4c"/>
<ellipse cx="63" cy="78" rx="6.500" ry="3" fill="#3a2a26"/><ellipse cx="103" cy="75" rx="6.500" ry="3" fill="#3a2a26"/>
<path d="M52 70c6-4 16-5 24-3M92 66c8-3 18-3 26 0" stroke="#3a2a26" stroke-width="2" fill="none" opacity=".6"/>
<path d="M80 84c-2 8-4 12-1 15 4 2 9 2 12 0" fill="none" stroke="#a85f45" stroke-width="2" opacity=".7"/>
</g>
<g filter="url(#b1)" fill="none" stroke="#463c42" stroke-width="2.800">
<path d="M45.500 70l33-3c2 0 3 1 3 3l-1 15c0 4-3 6-7 6l-20 1c-4 0-6-2-6-6z"/>
<path d="M87 66l33-2c2 0 3 1 3 3l-2 15c0 4-3 6-7 6l-19 1c-4 0-6-2-6-6z"/>
<path d="M80 74c2-2 5-2 7-1M122 66l12-2"/>
</g>
</g></svg>
<div class="abs" style="left:0;top:840px;width:1919px;height:239px;background:linear-gradient(180deg,rgba(0,0,0,0) 4%,rgba(0,0,0,.04) 12.5%,rgba(0,0,0,.10) 21%,rgba(0,0,0,.20) 29.3%,rgba(0,0,0,.33) 37.2%,rgba(0,0,0,.44) 44%,rgba(0,0,0,.54) 50.2%,rgba(0,0,0,.71) 61%,rgba(0,0,0,.79) 69%,rgba(0,0,0,.86) 75.3%,rgba(0,0,0,.945) 86.2%,rgba(0,0,0,.99) 91.2%,#000 96%)"></div>
<i class="abs" style="left:785.600px;top:993px;width:1020px;height:3px;background:#614411"></i><i class="abs" style="left:785.600px;top:996px;width:1020px;height:56px;background:linear-gradient(180deg,rgba(120,85,30,.07),rgba(120,85,30,0))"></i>
<div class="abs" style="left:352.500px;top:856px;width:308px;height:86px;border-radius:17px;background:linear-gradient(180deg,#f7a206 0%,#ea9803 35%,#d48a02 65%,#b37400 100%);box-shadow:0 2px 3px rgba(120,75,0,.5)"></div>
<svg class="abs" style="left:370.5px;top:887px" width="26" height="26.0" viewBox="0 0 24 24" preserveAspectRatio="none"><path d="M12.00 4.00L15.12 8.31L20.18 9.94L17.04 14.24L17.05 19.56L12.00 17.90L6.95 19.56L6.96 14.24L3.82 9.94L8.88 8.31Z" fill="#f4eee3" stroke="#f4eee3" stroke-width="5.400" stroke-linejoin="round"/></svg>
<span style="position:absolute;white-space:nowrap;left:411.5px;top:890.0px;font-size:15px;line-height:18px;font-weight:700;color:#f6ecd6;letter-spacing:0.11px;">Invites Sent</span>
<div class="abs" style="left:609px;top:877px;width:32px;height:44px;border-radius:16px;background:linear-gradient(180deg,#fbf9f5,#e6e2db);box-shadow:0 2px 3px rgba(90,55,0,.4)"></div>
<span style="position:absolute;white-space:nowrap;left:617.5px;top:886.0px;font-size:22px;line-height:26px;font-weight:400;color:#17171a;letter-spacing:0.00px;-webkit-text-stroke:0.5px #17171a;letter-spacing:0">0</span>
<i class="abs" style="left:45px;top:1006px;width:6px;height:21.500px;background:#fff"></i><i class="abs" style="left:57px;top:1006px;width:6px;height:21.500px;background:#fff"></i>
<span style="position:absolute;white-space:nowrap;left:90.5px;top:1007.5px;font-size:15px;line-height:18px;font-weight:400;color:#fff;letter-spacing:0.23px;-webkit-text-stroke:0.2px #fff;">10:21 / 11:31</span>
<i class="abs" style="left:36px;top:1052.500px;width:1848px;height:5px;border-radius:2.500px;background:#4d4d4d"></i>
<i class="abs" style="left:36px;top:1052.500px;width:1697px;height:5px;border-radius:2.500px;background:#9a9a9a"></i>
<i class="abs" style="left:36px;top:1052.500px;width:1657px;height:5px;border-radius:2.500px;background:#fff"></i>
<i class="abs" style="left:1685.500px;top:1048.500px;width:13px;height:13px;border-radius:50%;background:#fff"></i>
<svg class="abs" style="left:1702.500px;top:998.500px" width="37" height="37" viewBox="0 0 24 24"><path fill="#fff" d="M3 9v6h4l5 5V4L7 9H3zm13.500 3A4.500 4.500 0 0 0 14 7.970v8.050c1.480-.73 2.500-2.250 2.500-4.020zM14 3.230v2.060c2.890.86 5 3.540 5 6.710s-2.110 5.850-5 6.710v2.060c4.010-.91 7-4.490 7-8.770s-2.990-7.860-7-8.770z"/></svg>
<svg class="abs" style="left:1775.500px;top:998.500px" width="37" height="37" viewBox="0 0 24 24"><path fill="#fff" d="M5 16h3v3h2v-5H5v2zm3-8H5v2h5V5H8v3zm6 11h2v-3h3v-2h-5v5zm2-11V5h-2v5h5V8h-3z"/></svg>
<svg class="abs" style="left:1861px;top:1003px" width="10" height="28" viewBox="0 0 10 28"><circle cx="5" cy="5" r="2.700" fill="#fff"/><circle cx="5" cy="14" r="2.700" fill="#fff"/><circle cx="5" cy="23" r="2.700" fill="#fff"/></svg>
<svg class="abs" style="left:800px;top:957px" width="16" height="24" viewBox="0 0 16 24"><path d="M1.500 1.500v17l4-3.700 3 6.700 2.500-1.100-3-6.600h5.500z" fill="rgba(190,190,190,.55)" stroke="#1d2233" stroke-width="1.100"/></svg>

</div>
</body>
</html>
